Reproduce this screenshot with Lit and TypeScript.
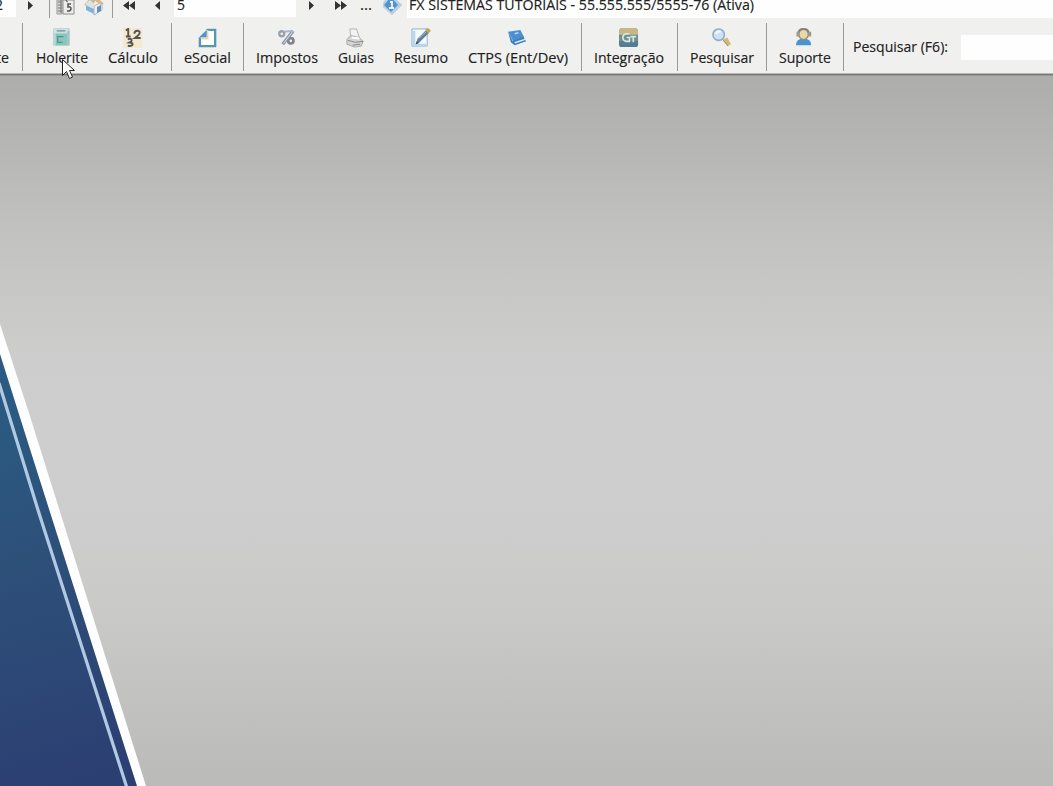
import { LitElement, html, css, svg } from "lit";
import { customElement, property } from "lit/decorators.js";

type Entry = { label: string; width: number; icon: unknown } | { sep: number };

const art = {
  holerite: svg`<rect x="1" y="0" width="18" height="19" rx="2" fill="#b9d8d3"/><path d="M4 6h12v12H4z" fill="#8cc4bb"/><path d="M2 1h15v4H2z" fill="#d0e2df"/><path d="M5 3h9" stroke="#719c9b" stroke-width="1.5"/><path d="M5 9h7M6 10v5h5" stroke="#4a978d" stroke-width="1.3" fill="none"/><path d="M17 3v15" stroke="#9fc4c4" stroke-width="2"/>`,
  calculo: svg`<rect x="-1" y="-1" width="21" height="22" rx="3" fill="#f4e8cf"/><g fill="none" stroke="#555451" stroke-width="2"><path d="M3 2.500L5.500 1V8.500M3 9h5"/><path d="M12 6c0-4 6-4 5.500-1 0 2-3 4-5 5.500h6"/><path d="M5 12c3-2 6.500 1 2 3.200 5.500 .3 3 5-2 3.300"/></g>`,
  esocial: svg`<path d="M9 2h9v17H2V10" fill="#fff" stroke="#5798ad" stroke-width="2.5"/><path d="M1 10L10 1v9z" fill="#4f91d4"/><path d="M3 11h7V2" fill="none" stroke="#e6d5a8" stroke-width="2"/>`,
  impostos: svg`<g fill="none"><circle cx="5" cy="6" r="2.600" stroke="#9ba2ab" stroke-width="2.500"/><circle cx="14.500" cy="13.500" r="2.800" stroke="#7d858e" stroke-width="2.800"/><path d="M17 3L6 17" stroke="#8d9aaa" stroke-width="3.500"/><path d="M17 3L7 16" stroke="#dce3eb"/><path d="M8 4l8-1" stroke="#a9b6c5" stroke-width="2"/></g>`,
  guias: svg`<path d="M4 1h7l3 9H5z" fill="#f3f3f3" stroke="#b0b0b0"/><path d="M1 12l4-4 9 2 4 4-2 5-7 1-8-3z" fill="#d6d6d6" stroke="#a4a4a4"/><path d="M2 13l8 2 8-1M7 18l8-1" stroke="#858585" fill="none"/><path d="M6 10l8 1" stroke="#fff" stroke-width="2"/>`,
  resumo: svg`<path d="M1 1h16v18H1z" fill="#f5fafe" stroke="#91afc8"/><path d="M3 3v15h13" fill="none" stroke="#b6d7f1" stroke-width="3"/><path d="M5 17l2-6L16 2l3 3-10 10z" fill="#617f9b"/><path d="M8 11l8-7" stroke="#a9c4da"/><path d="M15 1l3-1 3 3-3 3z" fill="#c9a557"/><path d="M5 17l1-3 2 2z" fill="#444"/>`,
  ctps: svg`<path d="M0 4L13 2l4 8-11 5z" fill="#4b8fd0"/><path d="M0 4l5 10 11-5 3 5-12 4-4-3z" fill="#3b7fc0"/><path d="M7 15.500L18 12" stroke="#e3eef7" stroke-width="1.500"/><path d="M7 6l4-1" stroke="#b8d9f3" stroke-width="1.600"/>`,
  integracao: svg`<rect x="0" y="0" width="20" height="20" rx="4" fill="#6b9192"/><path d="M0 4q0-4 4-4h12q4 0 4 4v3H0z" fill="#c9b585"/><path d="M0 14h20v3q0 3-3 3H3q-3 0-3-3z" fill="#547d91"/><path d="M11 6H7q-3 1-3 4t3 4h4v-4H8M12 9h6M15 9v6" stroke="#dce7e4" stroke-width="1.700" fill="none"/>`,
  pesquisar: svg`<path d="M11 12l5-2 4 7-4 2z" fill="#d4b978"/><path d="M11 12l6 7" stroke="#a28955"/><circle cx="7" cy="7" r="6" fill="#cce2f6" stroke="#94abc1" stroke-width="1.700"/><path d="M4 6q2-3 5-2" stroke="#f7fcff" stroke-width="2" fill="none"/>`,
  suporte: svg`<path d="M1 18q0-7 8-7t8 7z" fill="#4a93d1"/><ellipse cx="9" cy="6.500" rx="5" ry="5.500" fill="#ead8ad" stroke="#9b8c6e" stroke-width="1.500"/><path d="M3.500 6q0-5 5.500-5t5.500 5" fill="none" stroke="#878179" stroke-width="2"/><path d="M3 4v5M15.500 4v5" stroke="#9f9a90" stroke-width="3"/>`,
};

const entries: Entry[] = [
  { sep: 6 },
  { label: "Holerite", width: 52, icon: art.holerite },
  { label: "Cálculo", width: 50, icon: art.calculo },
  { sep: 6 },
  { label: "eSocial", width: 47, icon: art.esocial },
  { sep: 5 },
  { label: "Impostos", width: 62, icon: art.impostos },
  { label: "Guias", width: 36, icon: art.guias },
  { label: "Resumo", width: 54, icon: art.resumo },
  { label: "CTPS (Ent/Dev)", width: 100, icon: art.ctps },
  { sep: 6 },
  { label: "Integração", width: 70, icon: art.integracao },
  { sep: 6 },
  { label: "Pesquisar", width: 64, icon: art.pesquisar },
  { sep: 5 },
  { label: "Suporte", width: 52, icon: art.suporte },
  { sep: 5 },
];

@customElement("fitted-text")
class FittedText extends LitElement {
  @property() text = "";
  @property({ type: Number }) width = 10;
  static styles = css`
    :host { display: block; flex: none; }
    svg { display: block; overflow: visible; }
    text { font: 14.5px "Open Sans", "Noto Sans", sans-serif; fill: #202020; stroke: #202020; stroke-width: 0.15px; }
  `;
  render() {
    return html`<svg width=${this.width} height="20"><text x="0" y="15" textLength=${this.width} lengthAdjust="spacingAndGlyphs">${this.text}</text></svg>`;
  }
}

@customElement("app-root")
class AppRoot extends LitElement {
  static styles = css`
    :host { display: flex; flex-direction: column; width: 1053px; height: 786px; overflow: hidden; position: relative; background: #f0f0ef; }
    svg { display: block; flex: none; }
    .nav { height: 18px; flex: none; display: grid; grid-template-columns: 16px 33px 64px 61px 122px 61px 26px 24px 1fr; }
    .white { background: #fefefe; height: 17px; }
    .white fitted-text { position: relative; top: -5px; }
    .code { padding-left: 3px; }
    .year { display: flex; justify-content: flex-end; padding-right: 13px; }
    .title { padding-left: 2px; height: 18px; }
    .dots { margin-top: -5px; padding-left: 3px; }
    .tools { height: 55px; flex: none; display: flex; align-items: flex-start; }
    .first { width: 20px; flex: none; display: flex; justify-content: flex-end; padding: 30px 11px 0 0; box-sizing: border-box; }
    .tool { padding: 10px 10px 0; flex: none; display: flex; flex-direction: column; align-items: center; }
    .divider { height: 48px; margin-top: 5px; flex: none; display: flex; justify-content: center; }
    .first + .divider { justify-content: flex-start; padding-left: 2px; box-sizing: border-box; }
    .divider::before { content: ""; width: 1px; background: #999; }
    .search { padding: 19px 0 0 7px; display: flex; gap: 13px; flex: 1; }
    .field { height: 25px; margin-top: -2px; background: #fefefe; flex: 1; }
    .edge { height: 3px; flex: none; background: linear-gradient(#b7b7b6 0 1px, #777 1px 2px, #989897 2px); }
    .desk { flex: 1; background: linear-gradient(#adadab 0, #b5b5b3 9%, #bfbfbd 19%, #c6c6c4 28%, #cbcbc9 36%, #cdcdcd 40%, #cecece 50%, #cdcdcd 64%, #cacac8 74%, #c4c4c2 84%, #bfbfbd 92%, #babab8 100%); }
    .pointer { position: absolute; left: 61px; top: 58px; }
  `;

  entry(e: Entry) {
    return "sep" in e
      ? html`<div class="divider" style="width:${e.sep}px"></div>`
      : html`<div class="tool"><svg width="20" height="20" viewBox="0 0 21 21">${e.icon}</svg><fitted-text .text=${e.label} .width=${e.width}></fitted-text></div>`;
  }

  render() {
    return html`
      <div class="nav">
        <div class="white year"><fitted-text text="2" width="8"></fitted-text></div>
        <svg width="33" height="18"><path d="M12 1v9l5-4.500z" fill="#333"/></svg>
        <svg width="64" height="18">
          <path d="M.5 0v18M63.500 0v18" stroke="#999"/>
          <path d="M8 0h5v14H8z" fill="#d6d6d4" stroke="#999"/><path d="M9 2h3M9 5h3M9 8h3M9 11h3" stroke="#777"/><path d="M14 0h11v14H14z" fill="#ededeb" stroke="#8e8e8c"/><path d="M22 4h-3v3c4-1 4 4 0 4h-1" fill="none" stroke="#555" stroke-width="1.500"/><path d="M17 0v1l2 1" stroke="#777"/><path d="M12 0v13" stroke="#777"/>
          <path d="M37 5l8 4v5l-8-4z" fill="#80b3df"/><path d="M45 6l8-4v8l-8 5z" fill="#f4f0e3" stroke="#b1b5b7"/><path d="M35 5L41-2h8l6 6-3 1-6-4-3 7z" fill="#d6b98c"/><path d="M48 7l4-2v6l-4 2z" fill="#5c93c8"/><path d="M37 3l4-3 4 4-2 4-6-3z" fill="#d5e6ef"/>
        </svg>
        <svg width="61" height="18"><path d="M16 1v9l-6-4.500zM22 1v9l-6-4.500zM47 1v9l-5-4.500z" fill="#333"/></svg>
        <div class="white code"><fitted-text text="5" width="8"></fitted-text></div>
        <svg width="61" height="18"><path d="M13 1v9l5-4.500zM39 1v9l6-4.500zM45 1v9l6-4.500z" fill="#333"/></svg>
        <div class="dots"><fitted-text text="..." width="12"></fitted-text></div>
        <svg width="24" height="18"><path d="M-2 5L6-4h4l9 9-10 10z" fill="#b9d0e4" stroke="#cbd6df"/><path d="M1 5l7-8 7 8-7 7z" fill="#5593cd"/><path d="M7 2h2v5M6 8h5" stroke="#eef6fc" stroke-width="1.800" fill="none"/></svg>
        <div class="white title"><fitted-text text="FX SISTEMAS TUTORIAIS - 55.555.555/5555-76 (Ativa)" width="345"></fitted-text></div>
      </div>
      <div class="tools">
        <div class="first"><fitted-text text="te" width="13"></fitted-text></div>
        ${entries.map((e) => this.entry(e))}
        <div class="search"><fitted-text text="Pesquisar (F6):" width="95"></fitted-text><div class="field"></div></div>
      </div>
      <div class="edge"></div>
      <div class="desk">
        <svg width="150" height="710" viewBox="0 76 150 710">
          <defs><linearGradient id="blue" gradientUnits="userSpaceOnUse" x1="0" y1="400" x2="110" y2="786"><stop stop-color="#2b5b82"/><stop offset=".4" stop-color="#2d5079"/><stop offset="1" stop-color="#2c3e72"/></linearGradient></defs>
          <path d="M0 324L29 413 146 786H0z" fill="#fefefe"/>
          <path d="M0 354L29 446 137 786H0z" fill="url(#blue)"/>
          <path d="M-1 383L38 510 127 788" fill="none" stroke="#b1c9e2" stroke-width="3.200"/>
        </svg>
      </div>
      <svg class="pointer" width="16" height="24"><path d="M1.500 1.500v16l4-4 3 7 3-1.500-3-6.500h5z" fill="#fff" stroke="#222"/></svg>
    `;
  }
}
